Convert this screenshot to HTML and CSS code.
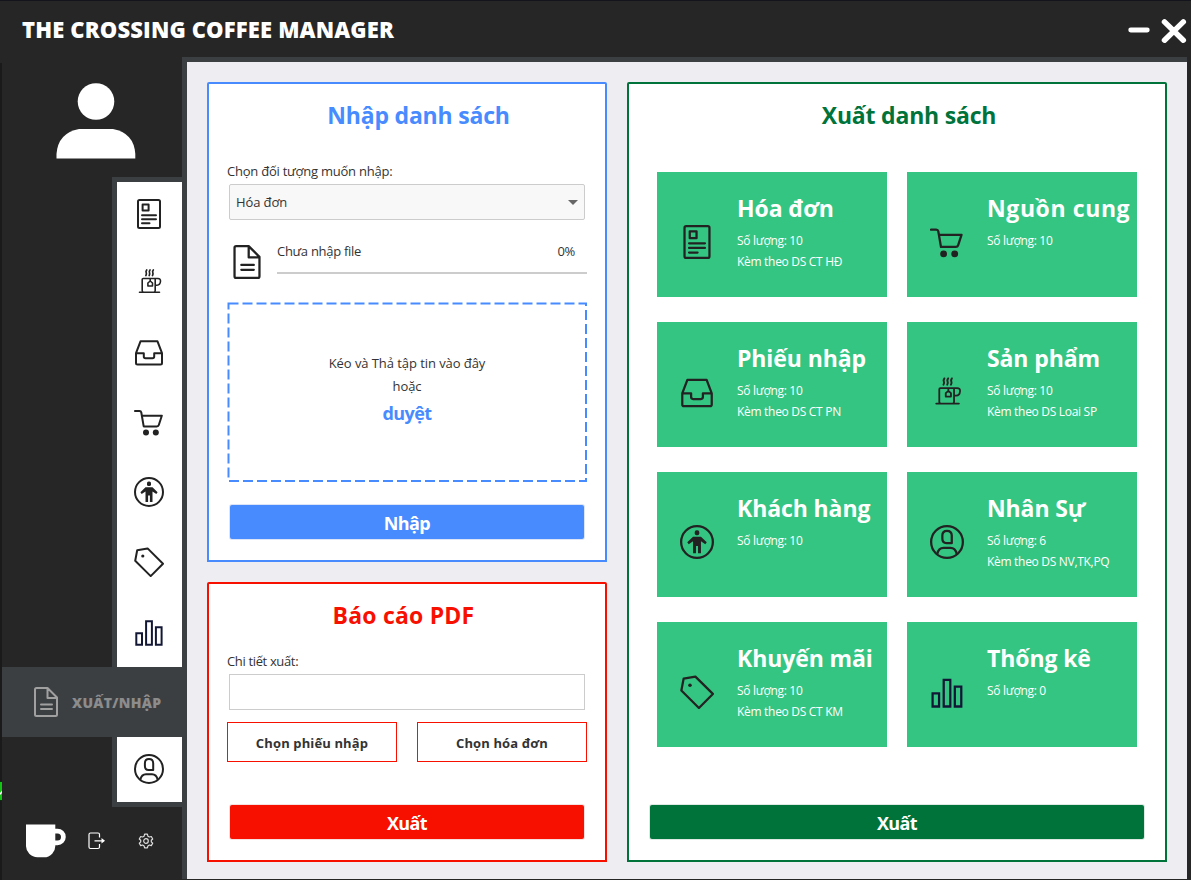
FILE: index.html
```html
<!DOCTYPE html>
<html lang="vi">
<head>
<meta charset="utf-8">
<title>The Crossing Coffee Manager</title>
<link rel="stylesheet" href="styles.css">
</head>
<body>
<svg class="defs" aria-hidden="true">
  <symbol id="i-receipt" viewBox="0 0 30 30"><rect x="4" y="1" width="22" height="28" rx="1.5"/><rect x="8.6" y="5.6" width="6" height="6"/><path d="M8 16.2H22M8 20.2H22M8 24.3H15.5"/></symbol>
  <symbol id="i-cup" viewBox="0 0 30 30"><path stroke-width="1.6" d="M8.2 23.500V12.500Q8.200 11.500 9.200 11.500H24Q26.700 11.500 26.500 14.300Q26.200 18.200 23 18.200H21.200M21.200 11.500V23.500Q21.200 25.200 19.700 25.200M8.200 23.500Q8.200 25.200 9.700 25.200M5.500 25.200H25.500M16.200 11.500V14M13.900 16L16.200 14L18.500 16V19H13.900Z"/><path stroke-width="1.700" d="M12.700 3Q11.600 4.500 12.200 5.700T11.900 8.500M16 3Q14.900 4.500 15.500 5.700T15.200 8.500M19.300 3Q18.200 4.500 18.800 5.700T18.500 8.500"/></symbol>
  <symbol id="i-tray" viewBox="0 0 30 30"><path d="M2 16.2L6.5 4.3H23.5L28 16.2V26Q28 27.5 26.5 27.5H3.5Q2 27.5 2 26ZM2 16.2H9.8V19.5Q9.8 21.2 11.5 21.2H18.5Q20.2 21.2 20.2 19.5V16.2H28"/></symbol>
  <symbol id="i-cart" viewBox="0 0 30 30"><path d="M.9 4H5.5Q7 4 7.3 5.5L9.7 19.4H22.8Q24.4 19.4 24.8 18L27.8 8.7H7.8"/><circle class="solid" cx="12" cy="25.4" r="3"/><circle class="solid" cx="21.8" cy="25.4" r="3"/></symbol>
  <symbol id="i-person" viewBox="0 0 30 30"><circle cx="15" cy="15" r="14"/><rect class="solid" x="13" y="4.6" width="4" height="4.4" rx="1.6"/><path class="solid" d="M11.5 10.3H18.5L23.6 15.2L22.3 16.9L18.5 14.4V24.9H15.9V18.6H14.1V24.9H11.5V14.4L7.7 16.9L6.4 15.2Z"/></symbol>
  <symbol id="i-tag" viewBox="0 0 30 30"><path d="M3.2 3.2L13.6 1.4L29 16.7L16.7 29.1L1.2 13.7Z"/><circle class="solid" cx="8.8" cy="9" r="1.6"/></symbol>
  <symbol id="i-bars" viewBox="0 0 30 30"><path d="M2.3 16.2H8V27.8H2.3ZM12.1 4.2H17.9V27.8H12.1ZM21.9 10.3H27.6V27.8H21.9Z"/></symbol>
  <symbol id="i-file" viewBox="0 0 30 30"><path d="M5.5 1H16.5L26 10.5V27.5Q26 29 24.5 29H5.5Q4 29 4 27.5V2.5Q4 1 5.5 1ZM16.5 1.5V11H25.5M10 17.6H21M10 21.9H21"/></symbol>
  <symbol id="i-user" viewBox="0 0 30 30"><circle cx="15" cy="15" r="14"/><path d="M19.2 16H14.5Q10.9 16 10.9 12V9.3Q10.9 5.1 15 5.1T19.2 9.3ZM6.4 25.6Q7.5 20.2 12 20.2H18Q22.5 20.2 23.6 25.6"/></symbol>
</svg>
<div class="window">
  <header class="titlebar">
    <h1 class="app-name">THE CROSSING COFFEE MANAGER</h1>
    <svg class="window-controls" viewBox="0 0 62 28"><path d="M3.700 14H20.300" stroke-width="4.800"/><path d="M37.500 5.900L56.300 24.200M56.300 5.900L37.500 24.200" stroke-width="5.500"/></svg>
  </header>
  <div class="body">
    <aside class="sidebar">
      <div class="edge"><span class="edge-mark"><svg viewBox="0 0 2 18"><path d="M0 11L2 8.500V11L0 13Z"/></svg></span></div>
      <div class="side-main">
        <svg class="avatar" viewBox="0 0 80 76"><circle cx="40" cy="18.500" r="18.300"/><path d="M.5 75.500V71Q2 50 23 46H57Q78 50 79.300 71V75.500Z"/></svg>
        <nav class="nav">
          <div class="nav-group first">
            <a class="nav-item short"><svg class="icon"><use href="#i-receipt"/></svg></a>
            <a class="nav-item"><svg class="icon"><use href="#i-cup"/></svg></a>
            <a class="nav-item"><svg class="icon"><use href="#i-tray"/></svg></a>
            <a class="nav-item"><svg class="icon"><use href="#i-cart"/></svg></a>
            <a class="nav-item"><svg class="icon"><use href="#i-person"/></svg></a>
            <a class="nav-item"><svg class="icon"><use href="#i-tag"/></svg></a>
            <a class="nav-item"><svg class="icon navy"><use href="#i-bars"/></svg></a>
          </div>
          <a class="nav-active"><svg class="icon"><use href="#i-file"/></svg><span>XUẤT/NHẬP</span></a>
          <div class="nav-group last">
            <a class="nav-item short"><svg class="icon"><use href="#i-user"/></svg></a>
          </div>
        </nav>
        <div class="side-foot">
          <svg class="mug" viewBox="0 0 40 34"><path d="M0 .5H29.300V4.700H31.500A8.200 8.200 0 0 1 31.500 21.200H29.300A11.500 11.500 0 0 1 18 33.300H11.500A11.500 11.500 0 0 1 0 21.500ZM29.300 9.500V16.500H31.500A3.500 3.500 0 0 0 31.500 9.500Z" fill-rule="evenodd"/></svg>
          <svg class="logout" viewBox="0 0 18 18"><path d="M11.500 5.500V2.500Q11.500 1 10 1H2.500Q1 1 1 2.500V15Q1 16.500 2.500 16.500H10Q11.500 16.500 11.500 15V12M6.500 8.800H15.500"/><path class="head" d="M13.500 6L17 8.800L13.500 11.500Z"/></svg>
          <svg class="gear" viewBox="0 0 16 16"><path d="M6.600 1.200H9.400L9.900 3.200L11.400 4L13.300 3.500L14.700 6L13.300 7.300V8.900L14.700 10.200L13.300 12.600L11.400 12L9.900 12.900L9.400 14.900H6.600L6.100 12.900L4.600 12L2.700 12.600L1.300 10.200L2.700 8.900V7.300L1.300 6L2.700 3.500L4.600 4L6.100 3.200Z"/><circle cx="8" cy="8" r="2.300"/></svg>
        </div>
      </div>
    </aside>
    <main class="content">
      <div class="left">
        <section class="panel import">
          <h2 class="panel-title">Nhập danh sách</h2>
          <label class="label">Chọn đối tượng muốn nhập:</label>
          <div class="select"><span>Hóa đơn</span><i class="caret"></i></div>
          <div class="file-row">
            <svg class="icon large"><use href="#i-file"/></svg>
            <div class="file-info"><span>Chưa nhập file</span><span>0%</span></div>
          </div>
          <div class="drop">
            <svg class="drop-frame" viewBox="0 0 360 180"><rect x="1.500" y="1.500" width="357.500" height="177.500"/></svg>
            <p>Kéo và Thả tập tin vào đây</p>
            <p>hoặc</p>
            <a class="browse">duyệt</a>
          </div>
          <button class="action">Nhập</button>
        </section>
        <section class="panel report">
          <h2 class="panel-title">Báo cáo PDF</h2>
          <label class="label detail">Chi tiết xuất:</label>
          <div class="input"></div>
          <div class="choices"><button class="choice">Chọn phiếu nhập</button><button class="choice">Chọn hóa đơn</button></div>
          <button class="action">Xuất</button>
        </section>
      </div>
      <section class="panel export">
        <h2 class="panel-title">Xuất danh sách</h2>
        <div class="cards">
          <article class="card"><svg class="icon large"><use href="#i-receipt"/></svg><div><h3>Hóa đơn</h3><p>Số lượng: 10</p><p>Kèm theo DS CT HĐ</p></div></article>
          <article class="card"><svg class="icon large"><use href="#i-cart"/></svg><div><h3 class="spaced">Nguồn cung</h3><p>Số lượng: 10</p></div></article>
          <article class="card"><svg class="icon large"><use href="#i-tray"/></svg><div><h3>Phiếu nhập</h3><p>Số lượng: 10</p><p>Kèm theo DS CT PN</p></div></article>
          <article class="card"><svg class="icon large"><use href="#i-cup"/></svg><div><h3>Sản phẩm</h3><p>Số lượng: 10</p><p>Kèm theo DS Loai SP</p></div></article>
          <article class="card"><svg class="icon large"><use href="#i-person"/></svg><div><h3>Khách hàng</h3><p>Số lượng: 10</p></div></article>
          <article class="card"><svg class="icon large"><use href="#i-user"/></svg><div><h3>Nhân Sự</h3><p>Số lượng: 6</p><p>Kèm theo DS NV,TK,PQ</p></div></article>
          <article class="card"><svg class="icon large"><use href="#i-tag"/></svg><div><h3>Khuyến mãi</h3><p>Số lượng: 10</p><p>Kèm theo DS CT KM</p></div></article>
          <article class="card"><svg class="icon large navy"><use href="#i-bars"/></svg><div><h3>Thống kê</h3><p>Số lượng: 0</p></div></article>
        </div>
        <button class="action">Xuất</button>
      </section>
    </main>
  </div>
</div>
</body>
</html>
```
FILE: styles.css
```css
* { box-sizing: border-box; }
body, h1, h2, h3, p { margin: 0; }
body { font-family: "Open Sans", "Noto Sans", sans-serif; color: #333; font-size: 13px; background: #262626; }
button { font: inherit; border: 0; padding: 0; }
.defs { position: absolute; width: 0; height: 0; }
.window { width: 1191px; height: 880px; display: flex; flex-direction: column; border-top: 1px solid #14141c; background: #262626; overflow: hidden; }
.titlebar { height: 56px; flex: none; display: flex; justify-content: space-between; padding-left: 22px; }
.app-name { font-size: 22px; font-weight: 800; color: #fff; line-height: 30px; margin-top: 13px; white-space: nowrap; letter-spacing: 0.15px; }
.window-controls { width: 62px; height: 28px; margin: 15px 2px 0 0; fill: none; stroke: #fff; stroke-linecap: round; }
.body { display: flex; height: 823px; }

.sidebar { width: 182px; display: flex; flex: none; }
.edge { width: 2px; background: #1a1a1a; margin-top: 6px; padding-top: 718px; }
.edge-mark { display: block; height: 20px; background: #14c414; border-block: 1px solid #07300a; }
.edge-mark svg { display: block; width: 2px; height: 18px; fill: #fff; }
.side-main { width: 180px; display: flex; flex-direction: column; }
.avatar { width: 80px; height: 76px; margin: 26px 0 0 54px; fill: #fff; }
.nav { margin-top: 18px; }
.nav-group { width: 70px; margin-left: 110px; background: #fff; border-left: 5px solid #3c3f42; }
.nav-group.first { border-top: 5px solid #3c3f42; }
.nav-group.last { border-bottom: 5px solid #3c3f42; }
.nav-item { height: 70px; display: flex; align-items: center; justify-content: center; padding-right: 1px; }
.nav-item.short { height: 65px; padding-bottom: 1px; }
.nav-active { height: 70px; background: #3c3f42; display: flex; align-items: center; padding-left: 29px; gap: 11px; color: #8c8c8c; font-size: 14px; font-weight: 800; letter-spacing: 0.3px; }
.nav-active .icon { stroke: #a0a0a0; }

.icon { width: 30px; height: 30px; flex: none; fill: none; stroke: #222; stroke-width: 2; stroke-linejoin: round; stroke-linecap: round; }
.icon.large { width: 34px; height: 34px; }
.icon.navy { stroke: #131736; stroke-linejoin: miter; }
.solid { fill: #222; stroke: none; }

.side-foot { display: flex; align-items: flex-start; margin-top: 17px; padding-left: 24px; }
.mug { width: 40px; height: 34px; fill: #fff; }
.logout { width: 18px; height: 18px; margin: 8px 0 0 21.5px; fill: none; stroke: #fff; stroke-width: 1.2; }
.logout .head { fill: #fff; stroke: none; }
.gear { width: 16px; height: 16px; margin: 9px 0 0 32.5px; fill: none; stroke: #ddd; stroke-width: 1.2; stroke-linejoin: round; }

.content { width: 1005px; height: 822px; border-left: 5px solid #3c3f42; border-top: 5px solid #3c3f42; background: #eeedf2; padding: 20px 20px 17px; display: flex; align-items: flex-start; gap: 20px; }
.left { width: 400px; display: flex; flex-direction: column; gap: 20px; }
.panel { background: #fff; border: 2px solid; border-radius: 2px 2px 0 0; display: flex; flex-direction: column; flex: none; padding: 0 18px 21px; }
.panel-title { font-size: 23px; font-weight: 700; line-height: 32px; text-align: center; margin: 15px 0 1px; letter-spacing: -0.2px; }
.import { height: 480px; border-color: #488bff; }
.import .panel-title, .browse { color: #488bff; }
.import .panel-title { padding-left: 23px; }
.report { height: 280px; border-color: #f71000; }
.report .panel-title { color: #f71000; padding-right: 7px; letter-spacing: 0.2px; }
.export { width: 540px; height: 780px; border-color: #00733a; }
.export .panel-title { color: #00733a; padding-left: 24px; }
.label { line-height: 20px; margin-top: 29px; letter-spacing: -0.23px; }
.label.detail { margin-top: 19px; letter-spacing: -0.35px; }
.select { height: 36px; margin: 3px 2px 0; border: 1px solid #ccc; border-radius: 2px; background: #f8f8f8; display: flex; justify-content: space-between; align-items: center; padding: 0 6px; letter-spacing: -0.1px; }
.caret { border: 5px solid transparent; border-top-color: #666; border-bottom: 0; }
.file-row { display: flex; margin-top: 25px; gap: 13px; padding-left: 3px; }
.file-info { flex: 1; height: 29px; border-bottom: 2px solid #ccc; display: flex; justify-content: space-between; line-height: 12px; padding-right: 12px; letter-spacing: -0.3px; }
.drop { height: 180px; margin-top: 23px; position: relative; display: flex; flex-direction: column; align-items: center; padding-top: 50px; line-height: 23px; letter-spacing: -0.07px; }
.drop-frame { position: absolute; inset: 0; width: 360px; height: 180px; fill: none; stroke: #488bff; stroke-width: 2; stroke-dasharray: 10 4; }
.browse { font-size: 18px; font-weight: 700; line-height: 30px; letter-spacing: -0.6px; }
.action { height: 34px; margin: auto 3px 0; border-radius: 2px; color: #fff; font-size: 18px; font-weight: 700; line-height: 34px; padding-top: 1px; letter-spacing: -0.6px; }
.import .action { background: #488bff; box-shadow: 0 0 0 1px #dce5f7; }
.report .action { background: #f71000; box-shadow: 0 0 0 1px #f7e0e0; }
.export .action { background: #00733a; box-shadow: 0 0 0 1px #dfe9e4; }
.input { height: 36px; margin: 3px 2px 0; border: 1px solid #ccc; }
.choices { display: flex; gap: 20px; margin-top: 12px; }
.choice { flex: 1; height: 40px; background: #fff; border: 1px solid #f71000; color: #333; font-weight: 700; font-size: 13px; padding-top: 2px; letter-spacing: 0.13px; }

.cards { display: grid; grid-template-columns: 230px 230px; grid-auto-rows: 125px; gap: 25px 20px; margin: 40px 0 0 10px; }
.card { background: #35c582; color: #fff; display: flex; padding-left: 23px; gap: 23px; }
.card .icon { margin-top: 53px; }
.card h3 { font-size: 23px; font-weight: 700; line-height: 32px; margin: 20px 0 6px; white-space: nowrap; letter-spacing: -0.1px; }
.card h3.spaced { letter-spacing: 0.6px; }
.card p { font-size: 12px; line-height: 21px; letter-spacing: -0.3px; }
```
